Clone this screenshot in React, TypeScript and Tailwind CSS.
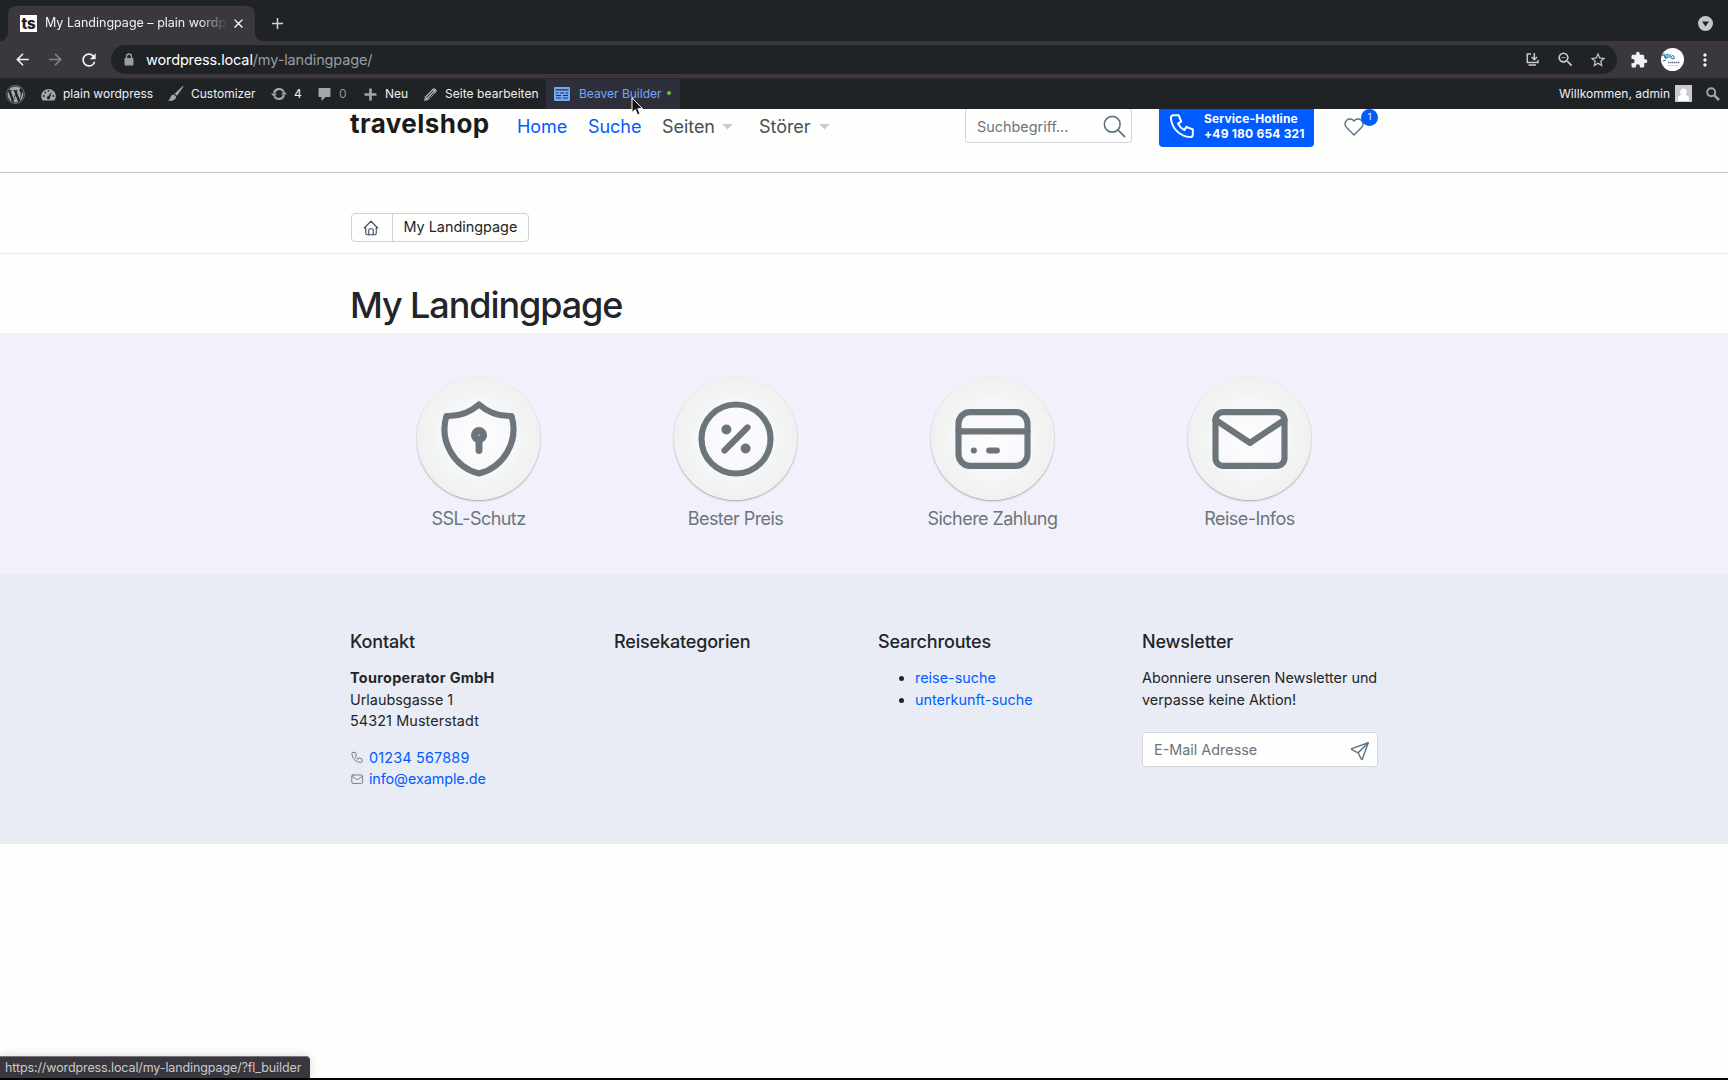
import React from "react";
import { FaWordpress } from "react-icons/fa";
import { MdExtension, MdStarBorder, MdRefresh, MdZoomOut, MdMoreVert, MdArrowBack, MdArrowForward, MdAdd, MdClose } from "react-icons/md";

type IconProps = { size: number; stroke?: number; className?: string; children: React.ReactNode };

function Line({ size, stroke = 1.5, className = "", children }: IconProps) {
  return (
    <svg width={size} height={size} viewBox="0 0 24 24" fill="none" stroke="currentColor" strokeWidth={stroke} strokeLinecap="round" strokeLinejoin="round" className={`shrink-0 ${className}`}>
      {children}
    </svg>
  );
}

const shield = (
  <>
    <path d="M12 3a12 12 0 0 0 8.5 3a12 12 0 0 1 -8.5 15a12 12 0 0 1 -8.5 -15a12 12 0 0 0 8.5 -3" />
    <circle cx="12" cy="11" r="1.15" strokeWidth="1.9" />
    <path d="M12 12v3" strokeWidth="1.8" />
  </>
);
const percent = (
  <>
    <circle cx="12" cy="12" r="9" />
    <path d="M9 15l6 -6" />
    <circle cx="9.5" cy="9.5" r=".5" fill="currentColor" />
    <circle cx="14.5" cy="14.5" r=".5" fill="currentColor" />
  </>
);
const card = (
  <>
    <rect x="3" y="5" width="18" height="14" rx="3" />
    <path d="M3 10h18M7 15h.01M11 15h2" />
  </>
);
const mail = (
  <>
    <rect x="3" y="5" width="18" height="14" rx="2" />
    <path d="M3 7l9 6l9 -6" />
  </>
);
const phone = (
  <path d="M5 4h4l2 5l-2.5 1.5a11 11 0 0 0 5 5l1.5 -2.5l5 2v4a2 2 0 0 1 -2 2a16 16 0 0 1 -15 -15a2 2 0 0 1 2 -2" />
);

function BrowserTabs() {
  return (
    <div className="flex h-[41px] items-end bg-[#1f2326] pl-2">
      <div className="relative flex h-[35px] w-[247px] items-center rounded-t-[8px] bg-[#3a383e] pl-3">
        <svg className="absolute bottom-0 -left-2" width="8" height="8"><path d="M8 0V8H0A8 8 0 0 0 8 0Z" fill="#3a383e" /></svg>
        <svg className="absolute -right-2 bottom-0" width="8" height="8"><path d="M0 0V8H8A8 8 0 0 1 0 0Z" fill="#3a383e" /></svg>
        <div className="flex size-[17px] items-center justify-center bg-white text-[15px] leading-none font-extrabold text-[#1f2326]">ts</div>
        <div className="ml-2 w-[182px] overflow-hidden text-[12.5px] whitespace-nowrap text-[#f2f2f4] [mask-image:linear-gradient(to_right,black_155px,transparent_182px)]">
          My Landingpage – plain wordpress
        </div>
        <MdClose size={15} className="ml-[4px] shrink-0 text-white" />
      </div>
      <MdAdd size={19} className="mb-[8px] ml-[13px] text-[#d0d1d4]" />
      <div className="mr-[15px] mb-[10px] ml-auto flex size-[15px] items-center justify-center rounded-full bg-[#c3c7ca]">
        <svg width="7" height="6"><path d="M0 .5H7L3.5 5.5Z" fill="#1f2326" /></svg>
      </div>
    </div>
  );
}

function Toolbar() {
  return (
    <div className="flex h-[38px] items-center border-b border-[#2b292e] bg-[#3a383e] pl-[13px]">
      <MdArrowBack size={19} className="text-[#f2f2f4]" />
      <MdArrowForward size={19} className="ml-[14px] text-[#858589]" />
      <MdRefresh size={20} className="ml-[14px] text-[#f2f2f4]" />
      <div className="ml-[12px] flex h-[29px] w-[1506px] items-center rounded-full bg-[#1f2326] pl-[11px]">
        <svg width="14" height="14" viewBox="0 0 14 14" className="mr-[10px]" fill="#9a9da3"><rect x="2.5" y="5" width="9" height="7.500" rx="1" /><path d="M4.500 5.500V3.500A2.500 2.500 0 0 1 9.500 3.500V5.500" fill="none" stroke="#9a9da3" strokeWidth="1.300" /></svg>
        <div className="text-[14.5px] tracking-[-0.13px] text-[#9a9ca0]">
          <span className="text-white">wordpress.local</span>/my-landingpage/
        </div>
        <div className="mr-[10px] ml-auto flex items-center text-[#c9cacd]">
          <svg width="15" height="15" viewBox="0 0 15 15" fill="none" stroke="currentColor" strokeWidth="1.5"><path d="M6 2H2.3V10.5H13V8M3.500 13H11" /><path d="M9.3 1V7.3M6.6 5L9.3 7.7L12 5" /></svg>
          <MdZoomOut size={19} className="mr-[14px] ml-[16px]" />
          <MdStarBorder size={18} />
        </div>
      </div>
      <MdExtension size={18} className="ml-[13px] text-[#f2f2f4]" />
      <div className="ml-[13px] flex size-[23px] shrink-0 items-center justify-center overflow-hidden rounded-full bg-white">
        <svg width="23" height="23" viewBox="0 0 23 23" fill="none">
          <path d="M1 8l2-2 1 4M5 11V7q3-2 2 2l-2 1M9 6v4M10 9q2-3 3 0t-3 1" stroke="#2b7fae" strokeWidth="1.1" />
          <path d="M2 13l3-1" stroke="#3d5875" /><path d="M7 14.5h12" stroke="#69717a" strokeWidth="1.5" strokeDasharray="1.5 .5" /><path d="M7 17.5h10" stroke="#b7dcec" />
        </svg>
      </div>
      <MdMoreVert size={20} className="ml-[11px] text-[#f2f2f4]" />
    </div>
  );
}

function AdminBar() {
  return (
    <div className="relative flex h-[30px] items-center bg-[#1f2326] pl-[6px] text-[12px] whitespace-nowrap text-[#f0f0f1]">
      <FaWordpress size={19} className="shrink-0 text-[#a2a7ad]" />
      <svg className="ml-[16px] shrink-0" width="15" height="13" viewBox="0 0 15 13">
        <path d="M1.6 12.5A7.3 7.3 0 1 1 13.4 12.5Z" fill="#a2a7ad" />
        <g fill="#1f2326"><circle cx="2.8" cy="8" r=".9" /><circle cx="4.2" cy="4.4" r=".9" /><circle cx="7.5" cy="2.8" r=".9" /><circle cx="12.2" cy="8" r=".9" /><path d="M10.8 3.6L9 9.4A1.6 1.6 0 1 1 7.2 8.2Z" /></g>
      </svg>
      <span className="ml-[7px] w-[105px]">plain wordpress</span>
      <svg className="shrink-0" width="16" height="16" viewBox="0 0 16 16" fill="#a2a7ad"><path d="M15.5 .6L9 9.8L6.6 7.8L14.6 .2Q15.8-.2 15.5 .6ZM6 8.6L8.2 10.6Q8 15 1 15Q-.2 14.800 .7 14.200Q2 13 2.300 11.400Q3.300 8.500 6 8.600Z" /></svg>
      <span className="ml-[7px] w-[80px]">Customizer</span>
      <svg className="shrink-0" width="16" height="14" viewBox="0 0 16 14" fill="none" stroke="#a2a7ad" strokeWidth="2.200"><path d="M3 6A5.200 5.200 0 0 1 12.500 4.500M13 8A5.200 5.200 0 0 1 3.500 9.500" /><path d="M0 6.500H6L3 10ZM10 7.500H16L13 4Z" fill="#a2a7ad" stroke="none" /></svg>
      <span className="ml-[7px] w-[24px]">4</span>
      <svg className="shrink-0" width="13" height="15" viewBox="0 0 13 15" fill="#a2a7ad"><path d="M1.500 1H11.500Q12.500 1 12.500 2V9Q12.500 10 11.500 10H7.500L3.500 14V10H1.500Q.5 10 .5 9V2Q.5 1 1.500 1Z" /></svg>
      <span className="ml-[8px] w-[25px] text-[#8f9398]">0</span>
      <svg className="shrink-0" width="13" height="13"><path d="M6.500 .5V12.500M.5 6.500H12.500" stroke="#a2a7ad" strokeWidth="2.600" /></svg>
      <span className="ml-[8px] w-[38px]">Neu</span>
      <svg className="shrink-0" width="15" height="15" viewBox="0 0 15 15"><path d="M1 14L2 9.500L10 1.500Q11 .8 12 1.500L13.500 3Q14 4 13.300 5L5.300 13Z" fill="#a2a7ad" /><path d="M3.500 10.500L10 4M5.500 11.500L11.500 5.500" stroke="#1f2326" strokeWidth=".9" /></svg>
      <span className="ml-[7px] w-[101px] tracking-[0.05px]">Seite bearbeiten</span>
      <div className="flex h-full w-[134px] items-center bg-[#2d303b] pl-[8px] text-[#76a9f5]">
        <svg className="shrink-0" width="16" height="14" viewBox="0 0 16 14"><rect width="16" height="14" rx="1" fill="#76a9f5" /><path d="M1.500 2.800H14.500M2 6H4.500M6 6H10M11.500 6H14M2 8.500H7M9 8.500H14M2 11H7M9 11H14" stroke="#2d303b" strokeWidth="1.200" /></svg>
        <span className="ml-[9px] w-[88px]">Beaver Builder</span>
        <span className="mb-[2px] size-[4px] shrink-0 rounded-full bg-[#6bc04b]" />
      </div>
      <div className="mr-[8px] ml-auto flex items-center">
        <span className="w-[116px] tracking-[0.03px]">Willkommen, admin</span>
        <svg className="mr-[14px] mb-[2px]" width="17" height="17"><rect width="17" height="17" fill="#c9c9ce" /><path d="M8.500 3.500A3.200 3.200 0 0 1 10.500 9.300L14 12V16H3V12L6.500 9.300A3.200 3.200 0 0 1 8.500 3.500Z" fill="#fff" /></svg>
        <svg width="14" height="14" fill="none" stroke="#a2a7ad"><circle cx="5.200" cy="5.200" r="4" strokeWidth="1.900" /><path d="M8.300 8.300L13 13" strokeWidth="2.600" /></svg>
      </div>
      <svg className="absolute top-[18px] left-[631px] z-10" width="14" height="20" viewBox="0 0 14 20"><path d="M1 1V15.500L4.300 12.500L6.600 17.800L9 16.800L6.800 11.600H11.500Z" fill="#111" stroke="#fff" strokeWidth="1" /></svg>
    </div>
  );
}

function Caret() {
  return <svg width="11" height="6" className="mt-[2px] shrink-0"><path d="M0 0H11L5.500 5.500Z" fill="#cbcccf" /></svg>;
}

function SiteHeader() {
  return (
    <header className="h-[64px] overflow-hidden border-b border-[#c4c5cb]">
      <div className="mx-auto flex h-[34px] w-[1028px] items-center">
        <div className="mt-[-5px] w-[167px] text-[26px] leading-none font-bold tracking-[0.45px] text-[#1b1b1d]">travelshop</div>
        <nav className="flex items-center text-[18px] tracking-[-0.05px] whitespace-nowrap text-[#495057]">
          <a className="w-[71px] text-[#005cff]">Home</a>
          <a className="w-[74px] text-[#005cff]">Suche</a>
          <a className="w-[60px]">Seiten</a>
          <Caret />
          <a className="ml-[26px] w-[60px]">Störer</a>
          <Caret />
        </nav>
        <div className="mt-[-1px] ml-auto flex h-[35px] w-[167px] shrink-0 items-center justify-between rounded-[3px] border border-[#ced4da] pr-[3px] pl-[11px] text-[14.4px] text-[#6c757d]">
          <span className="mt-[2px]">Suchbegriff...</span>
          <Line size={27} stroke={1.400} className="mt-px text-[#5a7184]"><circle cx="10" cy="10" r="7" /><path d="M21 21l-6 -6" /></Line>
        </div>
        <div className="mt-[-4px] ml-[27px] flex h-[46px] w-[155px] shrink-0 items-center rounded-[4px] bg-[#005cff] pl-[8px] text-[12px] leading-[14.400px] font-bold text-white">
          <Line size={31} stroke={1.500} className="mt-[2px] mr-[6px]">{phone}</Line>
          <div className="mt-[5px] whitespace-nowrap"><div className="tracking-[0.1px]">Service-Hotline</div><div className="tracking-[0.2px]">+49 180 654 321</div></div>
        </div>
        <div className="relative mt-[-2px] mr-[12px] ml-[28px] h-[23px] w-[24px] shrink-0">
          <Line size={24} stroke={1.400} className="text-[#5a7184]"><path d="M19.500 13.572l-7.500 7.428l-7.500 -7.428m0 0a5 5 0 1 1 7.500 -6.566a5 5 0 1 1 7.500 6.572" /></Line>
          <span className="absolute -top-[5px] left-[19px] flex size-[17px] items-center justify-center rounded-full bg-[#005cff] text-[9px] text-white">1</span>
        </div>
      </div>
    </header>
  );
}

function Feature({ label, children }: { label: string; children: React.ReactNode }) {
  return (
    <div className="flex flex-col items-center">
      <div className="flex size-[123px] items-center justify-center rounded-full bg-[radial-gradient(circle,#fefefc_0%,#f8f8fd_36%,#f2f5f4_52%,#f1f1f1_68%)] text-[#6c757a] shadow-[0_1px_2px_rgba(0,0,0,0.35)]">
        <Line size={92} stroke={1.600}>{children}</Line>
      </div>
      <div className="mt-[5px] text-[18px] leading-[27px] tracking-[-0.55px] text-[#6c757a]">{label}</div>
    </div>
  );
}

function Footer() {
  const heading = "mb-[14px] text-[18px] leading-[22px] font-medium tracking-[-0.16px]";
  return (
    <footer className="h-[270px] bg-[#e9ecf4] pt-[57px] text-[14.4px] leading-[21.600px]">
      <div className="mx-auto grid w-[1028px] grid-cols-4 gap-x-[28px] whitespace-nowrap">
        <div>
          <h4 className={heading}>Kontakt</h4>
          <div className="font-bold tracking-[0.32px]">Touroperator GmbH</div>
          <div>Urlaubsgasse 1</div>
          <div className="tracking-[0.1px]">54321 Musterstadt</div>
          <div className="mt-[15px] flex items-center tracking-[0.2px] text-[#005cff]"><Line size={14.400} className="mr-[4.500px] text-[#6c757d]">{phone}</Line>01234 567889</div>
          <div className="flex items-center tracking-[-0.08px] text-[#005cff]"><Line size={14.400} className="mr-[4.500px] text-[#6c757d]">{mail}</Line>info@example.de</div>
        </div>
        <div><h4 className={heading}>Reisekategorien</h4></div>
        <div>
          <h4 className={heading}>Searchroutes</h4>
          <ul className="list-disc pl-[37px]">
            <li><a className="text-[#005cff]">reise-suche</a></li>
            <li><a className="text-[#005cff]">unterkunft-suche</a></li>
          </ul>
        </div>
        <div>
          <h4 className={heading}>Newsletter</h4>
          <div className="tracking-[-0.02px]">Abonniere unseren Newsletter und</div>
          <div>verpasse keine Aktion!</div>
          <div className="mt-[22px] flex h-[35px] items-center justify-between rounded-[3px] border border-[#d3d6dc] bg-[#fefefc] pr-[6px] pl-[11px] text-[#6c757d]">
            E-Mail Adresse
            <Line size={22} stroke={1.500} className="mt-[3px] text-[#5a7184]"><path d="M10 14L21 3" /><path d="M21 3l-6.500 18a0.550 .55 0 0 1 -1 0l-3.500 -7l-7 -3.500a0.550 .55 0 0 1 0 -1l18 -6.500" /></Line>
          </div>
        </div>
      </div>
    </footer>
  );
}

export default function App() {
  return (
    <div className="relative flex h-[1080px] w-[1728px] flex-col overflow-hidden border-b-2 border-black bg-[#fefefc] font-['Inter','Liberation_Sans',sans-serif] text-[#212529]">
      <BrowserTabs />
      <Toolbar />
      <AdminBar />
      <SiteHeader />
      <div className="h-[81px] border-b border-[#e9ecf4] pt-[40px]">
        <div className="mx-auto w-[1027px]">
          <div className="flex h-[29px] w-[178px] items-center rounded-[4px] border border-[#cfd1d7] text-[14.4px] whitespace-nowrap">
            <div className="flex h-full w-[41px] items-center justify-center border-r border-[#cfd1d7] pr-px text-[#3d4f63]">
              <Line size={18}><path d="M5 12H3L12 3L21 12H19" /><path d="M5 12v7a2 2 0 0 0 2 2h10a2 2 0 0 0 2 -2v-7" /><path d="M9 21v-6a2 2 0 0 1 2 -2h2a2 2 0 0 1 2 2v6" /></Line>
            </div>
            <span className="mb-px ml-[11px]">My Landingpage</span>
          </div>
        </div>
      </div>
      <div className="h-[79px] pt-[30px]">
        <h1 className="mx-auto w-[1028px] text-[36px] leading-[43px] font-medium tracking-[-1.1px]">My Landingpage</h1>
      </div>
      <section className="h-[241px] bg-[#f1f1fb] pt-[44px]">
        <div className="mx-auto grid w-[1028px] grid-cols-4">
          <Feature label="SSL-Schutz">{shield}</Feature>
          <Feature label="Bester Preis">{percent}</Feature>
          <Feature label="Sichere Zahlung">{card}</Feature>
          <Feature label="Reise-Infos">{mail}</Feature>
        </div>
      </section>
      <Footer />
      <div className="absolute bottom-0 left-0 flex h-[22px] w-[310px] items-center rounded-tr-[4px] border-t border-[#77767b] bg-[#3a383e] pt-px pl-[5px] text-[12.5px] tracking-[-0.11px] whitespace-nowrap text-[#c9cacd] shadow-[0_0_10px_rgba(60,60,120,0.2)]">
        https://wordpress.local/my-landingpage/?fl_builder
      </div>
    </div>
  );
}
